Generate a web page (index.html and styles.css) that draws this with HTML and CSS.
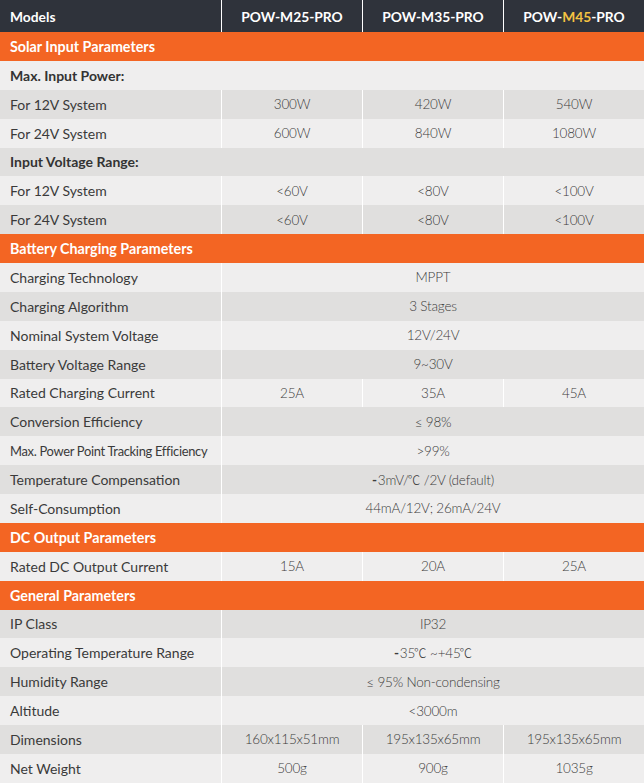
FILE: index.html
```html
<!DOCTYPE html>
<html lang="en">
<head>
<meta charset="utf-8">
<title>POW-M PRO Specifications</title>
<link rel="stylesheet" href="styles.css">
</head>
<body>
<div class="spec">
  <div class="row head">
    <div class="cell label">Models</div>
    <div class="cell val">POW-M25-PRO</div>
    <div class="cell val">POW-M35-PRO</div>
    <div class="cell val">POW-<span class="hl">M45</span>-PRO</div>
  </div>

  <div class="row section"><div class="cell label">Solar Input Parameters</div></div>
  <div class="row sub light"><div class="cell label">Max. Input Power:</div></div>
  <div class="row dark">
    <div class="cell label">For 12V System</div>
    <div class="cell val">300W</div><div class="cell val">420W</div><div class="cell val">540W</div>
  </div>
  <div class="row light">
    <div class="cell label">For 24V System</div>
    <div class="cell val">600W</div><div class="cell val">840W</div><div class="cell val">1080W</div>
  </div>
  <div class="row sub dark"><div class="cell label">Input Voltage Range:</div></div>
  <div class="row light">
    <div class="cell label">For 12V System</div>
    <div class="cell val">&lt;60V</div><div class="cell val">&lt;80V</div><div class="cell val">&lt;100V</div>
  </div>
  <div class="row dark">
    <div class="cell label">For 24V System</div>
    <div class="cell val">&lt;60V</div><div class="cell val">&lt;80V</div><div class="cell val">&lt;100V</div>
  </div>

  <div class="row section"><div class="cell label">Battery Charging Parameters</div></div>
  <div class="row light"><div class="cell label">Charging Technology</div><div class="cell val span">MPPT</div></div>
  <div class="row dark"><div class="cell label">Charging Algorithm</div><div class="cell val span">3 Stages</div></div>
  <div class="row light"><div class="cell label">Nominal System Voltage</div><div class="cell val span">12V/24V</div></div>
  <div class="row dark"><div class="cell label">Battery Voltage Range</div><div class="cell val span">9~30V</div></div>
  <div class="row light">
    <div class="cell label">Rated Charging Current</div>
    <div class="cell val">25A</div><div class="cell val">35A</div><div class="cell val">45A</div>
  </div>
  <div class="row dark"><div class="cell label">Conversion Efficiency</div><div class="cell val span">≤ 98%</div></div>
  <div class="row light"><div class="cell label narrow">Max. Power Point Tracking Efficiency</div><div class="cell val span">&gt;99%</div></div>
  <div class="row dark"><div class="cell label">Temperature Compensation</div><div class="cell val span"><b class="minus">-</b>3mV/<span class="deg">℃</span>&nbsp;/2V (default)</div></div>
  <div class="row light"><div class="cell label">Self-Consumption</div><div class="cell val span">44mA/12V; 26mA/24V</div></div>

  <div class="row section"><div class="cell label">DC Output Parameters</div></div>
  <div class="row light">
    <div class="cell label">Rated DC Output Current</div>
    <div class="cell val">15A</div><div class="cell val">20A</div><div class="cell val">25A</div>
  </div>

  <div class="row section"><div class="cell label">General Parameters</div></div>
  <div class="row dark"><div class="cell label">IP Class</div><div class="cell val span">IP32</div></div>
  <div class="row light"><div class="cell label">Operating Temperature Range</div><div class="cell val span"><b class="minus">-</b>35<span class="deg">℃</span>&nbsp;~+45<span class="deg">℃</span></div></div>
  <div class="row dark"><div class="cell label">Humidity Range</div><div class="cell val span">≤ 95% Non-condensing</div></div>
  <div class="row light"><div class="cell label">Altitude</div><div class="cell val span">&lt;3000m</div></div>
  <div class="row dark">
    <div class="cell label">Dimensions</div>
    <div class="cell val">160x115x51mm</div><div class="cell val">195x135x65mm</div><div class="cell val">195x135x65mm</div>
  </div>
  <div class="row light">
    <div class="cell label">Net Weight</div>
    <div class="cell val">500g</div><div class="cell val">900g</div><div class="cell val">1035g</div>
  </div>
</div>
</body>
</html>
```

FILE: styles.css
```css
html, body {
  margin: 0;
  padding: 0;
  background: #ffffff;
}

body {
  font-family: Lato, "Open Sans", "Liberation Sans", sans-serif;
  color: #3a3a3a;
}

.spec {
  width: 644px;
  display: flex;
  flex-direction: column;
}

.row {
  display: grid;
  grid-template-columns: 221px 140px 140px 140px;
  column-gap: 1px;
  background: #ffffff;
  height: 28.88px;
}

.cell {
  display: flex;
  align-items: center;
  font-size: 14px;
}

.label {
  padding-left: 10px;
}

.val {
  justify-content: center;
  color: #3c3c3c;
  font-weight: 300;
  font-size: 13.5px;
  letter-spacing: -0.2px;
}

.val.span {
  grid-column: 2 / span 3;
}

.light .cell { background: #efeeee; }
.dark .cell { background: #e0dfde; }

.head {
  height: 32px;
}

.head .cell {
  background: #2f333b;
  color: #ffffff;
  font-weight: 700;
  font-size: 13.8px;
  letter-spacing: 0;
}

.hl {
  color: #f4c242;
}

.section .cell,
.sub .cell {
  grid-column: 1 / span 4;
}

.section .cell {
  background: #f36523;
  color: #ffffff;
  font-weight: 700;
  font-size: 14.3px;
}

.sub .cell {
  font-weight: 700;
  color: #333333;
}

.narrow {
  font-size: 12.9px;
  letter-spacing: -0.3px;
}

.minus {
  font-weight: 700;
  margin-right: 1px;
}

.deg {
  font-family: "Noto Sans CJK SC", sans-serif;
  font-weight: 300;
  font-size: 12.5px;
  letter-spacing: 0;
  margin-left: -1px;
}
```
